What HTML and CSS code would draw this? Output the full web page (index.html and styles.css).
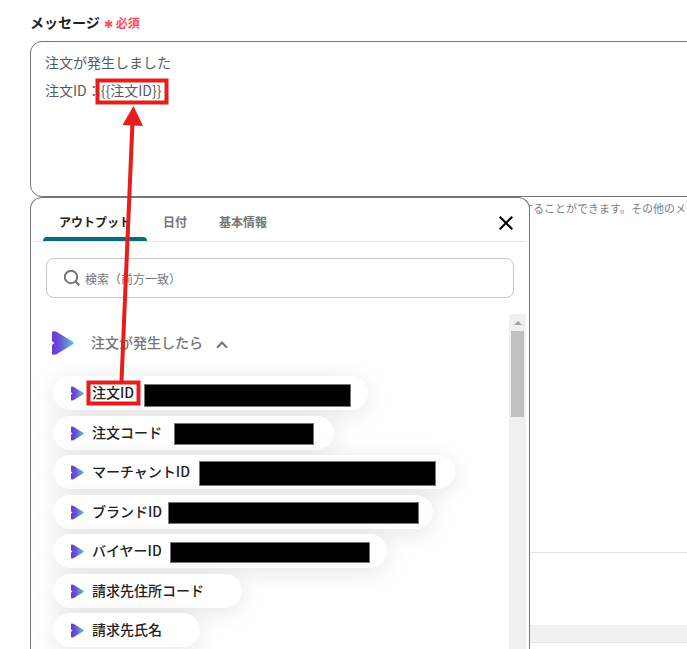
FILE: index.html
```html
<!DOCTYPE html>
<html lang="ja">
<head>
<meta charset="utf-8">
<title>メッセージ</title>
<link rel="stylesheet" href="styles.css">
</head>
<body>
<svg class="defs" aria-hidden="true">
  <defs>
    <linearGradient id="brand" x1="0" y1="0" x2="1" y2="0">
      <stop offset="0" stop-color="#6c35dd"/>
      <stop offset=".35" stop-color="#6a4fdc"/>
      <stop offset="1" stop-color="#5cc9c8"/>
    </linearGradient>
    <symbol id="play" viewBox="0 0 22 24">
      <path fill="url(#brand)" d="M0 1.500Q0 0 1.500 .2L4 .6L21 10.800Q22.400 12 21 13.200L4 23.400L1.500 23.800Q0 24 0 22.500V14L2.500 12L0 10Z"/>
    </symbol>
  </defs>
</svg>
<main class="page">
  <div class="field">
    <label class="field-label" for="message">メッセージ
      <span class="required"><svg class="asterisk" viewBox="0 0 10 10"><path d="M5 .5V9.500M1 2.800L9 7.200M9 2.800L1 7.200"/></svg>必須</span>
    </label>
    <textarea class="message" id="message">注文が発生しました
注文ID：{{注文ID}}</textarea>
    <p class="hint">することができます。その他のメ</p>
  </div>
  <div class="space"></div>
  <div class="row"></div>
  <div class="track"></div>

  <section class="picker">
    <header class="picker-head">
      <nav class="tabs">
        <button class="tab active" type="button">アウトプット</button>
        <button class="tab" type="button">日付</button>
        <button class="tab" type="button">基本情報</button>
      </nav>
      <button class="close" type="button" aria-label="閉じる"><svg viewBox="0 0 14 14"><path d="M.7 .7L13.300 13.300M13.300 .7L.7 13.300"/></svg></button>
    </header>
    <div class="search">
      <svg class="search-icon" viewBox="0 0 16 16"><circle cx="7" cy="7" r="6.200"/><path d="M11.500 11.500L15.300 15.300"/></svg>
      <input class="search-input" type="text" aria-label="検索" placeholder="検索（前方一致）">
    </div>
    <div class="results">
      <div class="group">
        <button class="group-head" type="button">
          <svg class="group-icon"><use href="#play"/></svg>
          注文が発生したら
          <svg class="chevron" viewBox="0 0 12 8"><path d="M1 6.800L6 1.500L11 6.800"/></svg>
        </button>
        <ul class="chips">
          <li><button class="chip" type="button" style="width:315px"><svg class="chip-icon"><use href="#play"/></svg>注文ID</button></li>
          <li><button class="chip" type="button" style="width:281px"><svg class="chip-icon"><use href="#play"/></svg>注文コード</button></li>
          <li><button class="chip" type="button" style="width:402px"><svg class="chip-icon"><use href="#play"/></svg>マーチャントID</button></li>
          <li><button class="chip" type="button" style="width:380px"><svg class="chip-icon"><use href="#play"/></svg>ブランドID</button></li>
          <li><button class="chip" type="button" style="width:334px"><svg class="chip-icon"><use href="#play"/></svg>バイヤーID</button></li>
          <li><button class="chip" type="button"><svg class="chip-icon"><use href="#play"/></svg>請求先住所コード</button></li>
          <li><button class="chip" type="button"><svg class="chip-icon"><use href="#play"/></svg>請求先氏名</button></li>
        </ul>
      </div>
      <div class="scrollbar"><div class="arrow"></div><div class="thumb"></div></div>
    </div>
  </section>

  <svg class="callout" aria-hidden="true">
    <g class="redacted">
      <rect x="144.500" y="384.500" width="206" height="22"/>
      <rect x="174.500" y="423.500" width="139" height="21"/>
      <rect x="199.500" y="461.500" width="236" height="24"/>
      <rect x="168.500" y="502.500" width="250" height="21"/>
      <rect x="170.500" y="542.500" width="199" height="20"/>
    </g>
    <rect x="97.500" y="80.500" width="69" height="22"/>
    <rect x="88.500" y="382.500" width="50" height="21"/>
    <path class="shaft" d="M121.500 381L132.500 122"/>
    <path class="head" d="M133.500 106L122.500 125L143 126Z"/>
  </svg>
</main>
</body>
</html>
```
FILE: styles.css
```css
* {
  box-sizing: border-box;
}

body {
  margin: 0;
  background: #fff;
  color: #222;
  font-family: "Noto Sans CJK JP", sans-serif;
  font-size: 14px;
}

button,
input,
textarea {
  font: inherit;
  color: inherit;
}

button {
  padding: 0;
  border: 0;
  background: none;
}

.defs {
  position: absolute;
  width: 0;
  height: 0;
}

.page {
  position: relative;
  display: flex;
  flex-direction: column;
  height: 100vh;
  padding: 12px 0 6px 30px;
  overflow: hidden;
}

.field-label {
  display: flex;
  align-items: center;
  gap: 4px;
  height: 20px;
  margin-bottom: 9px;
  font-weight: 700;
}

.required {
  display: flex;
  align-items: center;
  gap: 3px;
  color: #ff4757;
  font-size: 12px;
  font-weight: 700;
}

.asterisk {
  width: 9px;
  height: 10px;
  margin-top: 3px;
  fill: none;
  stroke: #ff4757;
  stroke-width: 2;
}

.message {
  display: block;
  width: calc(100% + 16px);
  height: 156px;
  padding: 6px 14px;
  border: 1px solid #757575;
  border-radius: 12px;
  outline: 0;
  resize: none;
  background: #fff;
  color: #555b61;
  line-height: 28px;
}

.hint {
  margin: 2px 0 0 492px;
  overflow: hidden;
  color: #7a828a;
  font-size: 11px;
  line-height: 18px;
  white-space: nowrap;
}

.space {
  flex: 1;
  border-bottom: 1px solid #e4e4e4;
}

.row {
  height: 72px;
}

.track {
  height: 18px;
  border-bottom: 1px solid #e4e4e4;
  background: #f0f0f0;
}

.picker {
  position: absolute;
  top: 197px;
  bottom: 0;
  left: 30px;
  display: flex;
  flex-direction: column;
  width: 500px;
  max-width: 100%;
  padding: 0 3px;
  border: 1px solid #757575;
  border-bottom: 0;
  border-radius: 12px 12px 0 0;
  background: #fff;
}

.picker-head {
  display: flex;
  justify-content: space-between;
  align-items: center;
  height: 44px;
  flex: none;
  padding: 0 13px 0 9px;
  border-bottom: 1px solid #e4e4e4;
}

.tabs {
  display: flex;
  align-self: stretch;
}

.tab {
  position: relative;
  padding: 4px 16px 0;
  color: #757575;
  font-size: 12px;
  font-weight: 700;
}

.tab.active {
  color: #222;
}

.tab.active::after {
  content: "";
  position: absolute;
  right: 0;
  bottom: 0;
  left: 0;
  height: 4px;
  border-radius: 4px 4px 0 0;
  background: #086b82;
}

.close {
  display: flex;
  margin-top: 6px;
}

.close svg {
  width: 14px;
  height: 14px;
  fill: none;
  stroke: #000;
  stroke-width: 2;
}

.search {
  display: flex;
  align-items: center;
  gap: 5px;
  height: 40px;
  flex: none;
  margin: 16px 12px;
  padding: 0 17px;
  border: 1px solid #c8c8c8;
  border-radius: 8px;
}

.search-icon {
  width: 16px;
  height: 16px;
  flex: none;
  fill: none;
  stroke: #757575;
  stroke-width: 2;
}

.search-input {
  flex: 1;
  padding: 0;
  border: 0;
  outline: 0;
  background: none;
  font-size: 12px;
}

.search-input::placeholder {
  color: #757575;
}

.results {
  display: flex;
  flex: 1;
  min-height: 0;
}

.group {
  flex: 1;
  overflow: hidden;
  padding: 17px 0 0 19px;
}

.group-head {
  display: flex;
  align-items: center;
  height: 24px;
  margin: 0 0 21px -1px;
  padding-bottom: 2px;
  color: #757575;
  font-weight: 500;
  line-height: 20px;
}

.group-icon {
  width: 22px;
  height: 24px;
  margin: 2px 17px 0 0;
}

.chevron {
  width: 12px;
  height: 8px;
  margin: 6px 0 0 13px;
  fill: none;
  stroke: #757575;
  stroke-width: 2;
}

.chips {
  margin: 0;
  padding: 0;
  list-style: none;
}

.chips li {
  display: flex;
  margin-bottom: 5px;
}

.chips li:nth-child(odd) {
  margin-bottom: 6px;
}

.chip {
  display: flex;
  align-items: center;
  height: 34px;
  padding: 0 38px 2px 18px;
  border-radius: 17px;
  background: #fff;
  box-shadow: 0 4px 24px rgba(0, 0, 0, 0.1);
  font-weight: 500;
  line-height: 20px;
  white-space: nowrap;
}

.chip-icon {
  width: 13px;
  height: 15px;
  flex: none;
  margin: 2px 8px 0 0;
}

.scrollbar {
  width: 17px;
  flex: none;
  padding: 7px 2px;
  background: #f0f0f0;
}

.arrow {
  width: 0;
  margin: 0 auto 6px;
  border: 4px solid transparent;
  border-top: 0;
  border-bottom-color: #a0a0a0;
}

.thumb {
  height: 86px;
  background: #c0c0c0;
}

.callout {
  position: absolute;
  top: 0;
  left: 0;
  width: 450px;
  height: 580px;
  fill: none;
  stroke: #e71c1c;
  stroke-width: 4;
  pointer-events: none;
}

.callout .redacted {
  fill: #000;
  stroke: #777;
  stroke-width: 1;
}

.callout .head {
  fill: #e71c1c;
  stroke: none;
}
```
